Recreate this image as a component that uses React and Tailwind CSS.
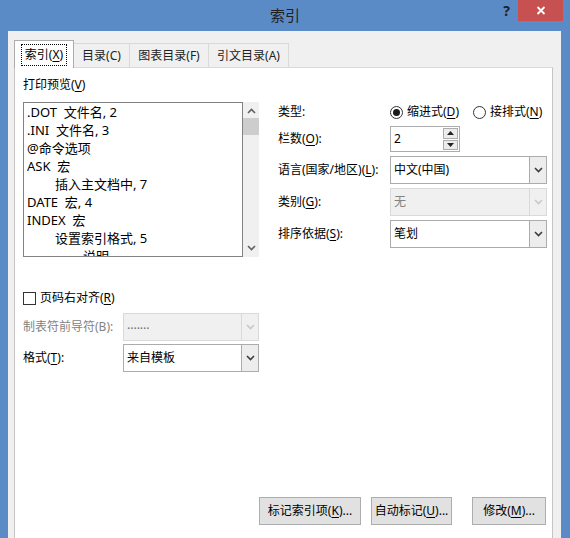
import React from 'react';

const U = ({ children }) => <span className="underline underline-offset-[2px] decoration-1">{children}</span>;

const Chevron = ({ disabled }) => (
  <svg width="9" height="6" viewBox="0 0 9 6">
    <path d="M1 1l3.5 3.5L8 1" fill="none" stroke={disabled ? '#c8c8c8' : '#3c3c3c'} strokeWidth="1.6" />
  </svg>
);

const Combo = ({ children, disabled, width }) => (
  <div
    className={`flex h-[28px] ${width} border ${
      disabled ? 'border-[#d9d9d9] bg-[#f0f0f0] text-[#838383]' : 'border-[#acacac] bg-white text-black'
    }`}
  >
    <div className="flex-1 pl-[3px] flex items-center">{children}</div>
    <div
      className={`w-[17px] flex items-center justify-center border-l ${
        disabled ? 'border-[#d9d9d9]' : 'border-[#acacac] bg-[#ededed]'
      }`}
    >
      <Chevron disabled={disabled} />
    </div>
  </div>
);

const Radio = ({ checked }) => (
  <div className="w-[13px] h-[13px] rounded-full border border-[#333] bg-white flex items-center justify-center">
    {checked && <div className="w-[7px] h-[7px] rounded-full bg-[#1a1a1a]" />}
  </div>
);

const lines = [
  { t: '.DOT  文件名, 2', i: 0 },
  { t: '.INI  文件名, 3', i: 0 },
  { t: '@命令选项', i: 0 },
  { t: 'ASK  宏', i: 0 },
  { t: '插入主文档中, 7', i: 1 },
  { t: 'DATE  宏, 4', i: 0 },
  { t: 'INDEX  宏', i: 0 },
  { t: '设置索引格式, 5', i: 1 },
  { t: '说明', i: 2 },
];

const indents = ['pl-[3px]', 'pl-[31px]', 'pl-[59px]'];

const Button = ({ width, children }) => (
  <div className={`${width} h-[28px] border border-[#adadad] bg-[#e1e1e1] flex items-center justify-center text-black`}>
    {children}
  </div>
);

export default function App() {
  return (
    <div className="w-[570px] h-[538px] overflow-hidden bg-[#5a8bc7] flex flex-col font-['Noto_Sans','Noto_Sans_CJK_SC',sans-serif] text-[12px] leading-[16px] text-black">
      {/* title bar */}
      <div className="h-[31px] flex shrink-0">
        <div className="w-[75px]" />
        <div className="flex-1 text-center pt-[5px] text-[15px] leading-[20px] text-[#1f1f1f] font-['Noto_Sans_CJK_SC',sans-serif]">
          索引
        </div>
        <div className="w-[75px] flex items-start">
          <div className="w-[23px] pt-[3px] text-center text-[14px] leading-[16px] font-bold text-[#222]">?</div>
          <div className="w-[45px] h-[21px] bg-[#c75050] flex items-center justify-center">
            <svg width="10" height="9" viewBox="0 0 10 9">
              <path d="M1.5 1l7 7M8.5 1l-7 7" stroke="white" strokeWidth="1.8" />
            </svg>
          </div>
        </div>
      </div>

      {/* client area */}
      <div className="flex-1 ml-[8px] mr-[9px] bg-[#f0f0f0] pl-[6px] pr-[8px] pt-[9px] flex flex-col">
        {/* tabs */}
        <div className="flex items-end h-[28px] relative z-10 -mb-px">
          <div className="w-[60px] h-[28px] bg-white border border-b-0 border-[#acacac] flex items-start justify-center pt-[3px]">
            <div className="border border-dotted border-black px-[3px] h-[22px] flex items-center text-black">
              索引(<U>X</U>)
            </div>
          </div>
          <div className="w-[56px] h-[25px] border border-l-0 border-b-0 border-[#d9d9d9] flex items-center justify-center text-[#222]">
            目录(C)
          </div>
          <div className="w-[79px] h-[25px] border border-l-0 border-b-0 border-[#d9d9d9] flex items-center justify-center text-[#222]">
            图表目录(F)
          </div>
          <div className="w-[80px] h-[25px] border border-l-0 border-b-0 border-[#d9d9d9] flex items-center justify-center text-[#222]">
            引文目录(A)
          </div>
        </div>

        {/* panel */}
        <div className="flex-1 bg-white border border-[#c4c4c4] border-b-0 border-t-[#d9d9d9] flex flex-col pl-[8px] pr-[6px]">
          <div className="flex">
            {/* left column */}
            <div className="w-[236px] flex flex-col">
              <div className="mt-[9px] h-[16px]">
                打印预览(<U>V</U>)
              </div>
              <div className="mt-[9px] flex h-[155px]">
                <div className="w-[220px] h-[155px] border border-[#828282] overflow-hidden text-[13px] leading-[18px]">
                  {lines.map((l, k) => (
                    <div key={k} className={`${indents[l.i]} whitespace-pre`}>
                      {l.t}
                    </div>
                  ))}
                </div>
                <div className="w-[16px] h-[155px] bg-[#f0f0f0] flex flex-col items-center">
                  <svg className="mt-[6px]" width="9" height="6" viewBox="0 0 9 6">
                    <path d="M1 5l3.5-3.5L8 5" fill="none" stroke="#606060" strokeWidth="1.6" />
                  </svg>
                  <div className="mt-[4px] w-[16px] h-[17px] bg-[#cdcdcd]" />
                  <div className="flex-1" />
                  <svg className="mb-[6px]" width="9" height="6" viewBox="0 0 9 6">
                    <path d="M1 1l3.5 3.5L8 1" fill="none" stroke="#606060" strokeWidth="1.6" />
                  </svg>
                </div>
              </div>

              <div className="mt-[33px] h-[16px] flex items-center">
                <div className="w-[13px] h-[13px] border border-[#333] bg-white" />
                <span className="ml-[4px]">
                  页码右对齐(<U>R</U>)
                </span>
              </div>

              <div className="mt-[7px] flex items-center">
                <div className="w-[100px] text-[#838383]">制表符前导符(B):</div>
                <Combo disabled width="w-[136px]">
                  <span className="text-[#6d6d6d] pb-[4px]">.......</span>
                </Combo>
              </div>

              <div className="mt-[3px] flex items-center">
                <div className="w-[100px]">
                  格式(<U>T</U>):
                </div>
                <Combo width="w-[136px]">来自模板</Combo>
              </div>
            </div>

            {/* right column */}
            <div className="ml-[19px] w-[269px] flex flex-col">
              <div className="mt-[34px] h-[20px] flex items-center">
                <div className="w-[112px]">类型:</div>
                <Radio checked />
                <span className="ml-[4px]">
                  缩进式(<U>D</U>)
                </span>
                <div className="ml-[14px]">
                  <Radio />
                </div>
                <span className="ml-[4px]">
                  接排式(<U>N</U>)
                </span>
              </div>

              <div className="mt-[4px] flex items-center">
                <div className="w-[112px]">
                  栏数(<U>O</U>):
                </div>
                <div className="w-[70px] h-[26px] border border-[#acacac] bg-white flex">
                  <div className="flex-1 pl-[3px] flex items-center">2</div>
                  <div className="w-[16px] flex flex-col gap-[1px] py-[1px] pr-[1px]">
                    <div className="h-[11px] border border-[#acacac] bg-[#ececec] flex items-center justify-center">
                      <svg width="7" height="4" viewBox="0 0 7 4">
                        <path d="M0 4L3.5 0L7 4Z" fill="#222" />
                      </svg>
                    </div>
                    <div className="h-[11px] border border-[#acacac] bg-[#ececec] flex items-center justify-center">
                      <svg width="7" height="4" viewBox="0 0 7 4">
                        <path d="M0 0L3.5 4L7 0Z" fill="#222" />
                      </svg>
                    </div>
                  </div>
                </div>
              </div>

              <div className="mt-[4px] flex items-center">
                <div className="w-[112px]">
                  语言(国家/地区)(<U>L</U>):
                </div>
                <Combo width="w-[157px]">中文(中国)</Combo>
              </div>

              <div className="mt-[4px] flex items-center">
                <div className="w-[112px]">
                  类别(<U>G</U>):
                </div>
                <Combo disabled width="w-[157px]">
                  无
                </Combo>
              </div>

              <div className="mt-[4px] flex items-center">
                <div className="w-[112px]">
                  排序依据(<U>S</U>):
                </div>
                <Combo width="w-[157px]">笔划</Combo>
              </div>
            </div>
          </div>

          {/* buttons */}
          <div className="mt-auto mb-[13px] flex justify-end gap-[10px]">
            <Button width="w-[102px]">
              标记索引项(<U>K</U>)...
            </Button>
            <Button width="w-[81px]">
              自动标记(<U>U</U>)...
            </Button>
            <div className="ml-[10px]">
              <Button width="w-[74px]">
                修改(<U>M</U>)...
              </Button>
            </div>
          </div>
        </div>
      </div>
    </div>
  );
}
